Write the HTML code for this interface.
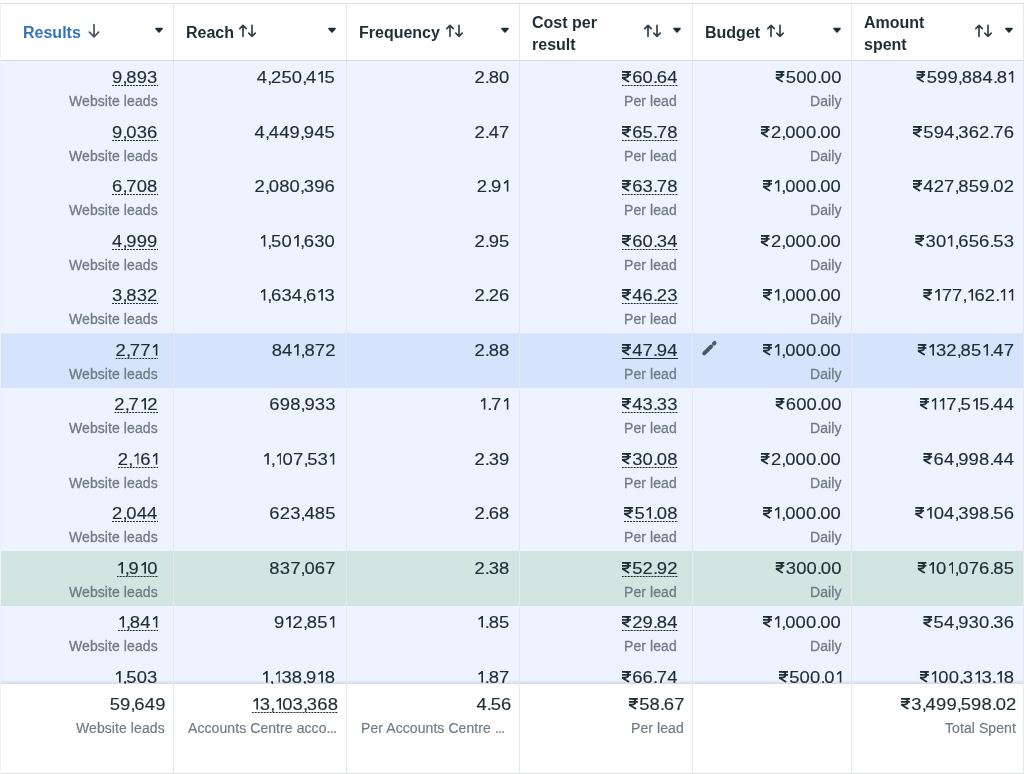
<!DOCTYPE html><html><head><meta charset="utf-8"><style>

html,body{margin:0;padding:0;}
body{width:1024px;height:774px;overflow:hidden;background:#fff;position:relative;font-family:"Liberation Sans",sans-serif;color:#1f2d35;}
.a{position:absolute;}
.t{will-change:transform;}
.t{position:absolute;white-space:nowrap;}
.num{font-size:16px;line-height:20px;letter-spacing:0.15px;transform:scaleX(1.15);transform-origin:100% 50%;-webkit-text-stroke:0.15px currentColor;}
.num i{font-style:normal;}
.num .cm{margin-right:-1.3px;}
.one{display:inline-block;width:4.78px;height:11.7px;vertical-align:0;margin-left:1.3px;margin-right:1.0px;}
.onet{display:inline-block;width:4.78px;height:11.7px;vertical-align:0;margin-left:1.3px;margin-right:0.2px;}
.sub{font-size:14px;line-height:18px;letter-spacing:0.08px;color:#707b85;-webkit-text-stroke:0.3px currentColor;}
.hd{font-size:16px;line-height:22px;font-weight:bold;letter-spacing:0px;}
.rp{display:inline-block;width:8.2px;height:11.7px;vertical-align:0px;margin-right:0.9px;}
.dot{background-image:linear-gradient(to right,#1c2b33 55%,transparent 55%);background-size:2.6px 1.4px;background-repeat:repeat-x;background-position:0px 15.7px;padding-bottom:3px;}
.sol{background-image:linear-gradient(#1f2d35,#1f2d35);background-size:100% 1.2px;background-repeat:no-repeat;background-position:0 15.9px;padding-bottom:3px;}

</style></head><body>
<svg width="0" height="0" style="position:absolute"><defs><symbol id="rup" viewBox="0 0 10 12"><path d="M0,0.9 H10 M0,3.9 H10 M3.4,0.9 C8.5,0.9 8.5,6.9 3.4,6.9 H0.5 L7.9,11.2" fill="none" stroke="currentColor" stroke-width="1.85"/></symbol><symbol id="one1" viewBox="0 0 5.5 11.7"><path d="M3.5,0 H5.2 V11.7 H3.5 V2.3 L1.0,4.1 L0.3,2.8 L3.5,0.3 Z" fill="currentColor"/></symbol></defs></svg>
<div class="a" style="left:0;top:60.5px;width:1024px;height:55.0px;background:#edf4ff"></div>
<div class="a" style="left:0;top:115.0px;width:1024px;height:55.0px;background:#edf4ff"></div>
<div class="a" style="left:0;top:169.5px;width:1024px;height:55.0px;background:#edf4ff"></div>
<div class="a" style="left:0;top:224.0px;width:1024px;height:55.0px;background:#edf4ff"></div>
<div class="a" style="left:0;top:278.5px;width:1024px;height:55.0px;background:#edf4ff"></div>
<div class="a" style="left:0;top:333.0px;width:1024px;height:55.0px;background:#d5e4fc"></div>
<div class="a" style="left:0;top:387.5px;width:1024px;height:55.0px;background:#edf4ff"></div>
<div class="a" style="left:0;top:442.0px;width:1024px;height:55.0px;background:#edf4ff"></div>
<div class="a" style="left:0;top:496.5px;width:1024px;height:55.0px;background:#edf4ff"></div>
<div class="a" style="left:0;top:551.0px;width:1024px;height:55.0px;background:#d2e5e0"></div>
<div class="a" style="left:0;top:605.5px;width:1024px;height:55.0px;background:#edf4ff"></div>
<div class="a" style="left:0;top:660.0px;width:1024px;height:55.0px;background:#edf4ff"></div>
<div class="a" style="left:0;top:3px;width:1024px;height:57px;background:#fff"></div>
<div class="t num" style="right:866.35px;top:68.26px;"><span class="dot">9<i class="cm">,</i>893</span></div>
<div class="t sub" style="right:866.42px;top:92.25px;">Website leads</div>
<div class="t num" style="right:688.75px;top:68.26px;">4<i class="cm">,</i>250<i class="cm">,</i>4<svg class="one" viewBox="0 0 5.5 11.7" preserveAspectRatio="none"><use href="#one1"/></svg>5</div>
<div class="t num" style="right:514.95px;top:68.26px;">2<i class="cm">.</i>80</div>
<div class="t num" style="right:346.65px;top:68.26px;"><span class="dot"><svg class="rp" viewBox="0 0 10 12" preserveAspectRatio="none"><use href="#rup"/></svg>60<i class="cm">.</i>64</span></div>
<div class="t sub" style="right:346.72px;top:92.25px;">Per lead</div>
<div class="t num" style="right:182.65px;top:68.26px;"><svg class="rp" viewBox="0 0 10 12" preserveAspectRatio="none"><use href="#rup"/></svg>500<i class="cm">.</i>00</div>
<div class="t sub" style="right:182.72px;top:92.25px;">Daily</div>
<div class="t num" style="right:10.05px;top:68.26px;"><svg class="rp" viewBox="0 0 10 12" preserveAspectRatio="none"><use href="#rup"/></svg>599<i class="cm">,</i>884<i class="cm">.</i>8<svg class="onet" viewBox="0 0 5.5 11.7" preserveAspectRatio="none"><use href="#one1"/></svg></div>
<div class="t num" style="right:866.35px;top:122.76px;"><span class="dot">9<i class="cm">,</i>036</span></div>
<div class="t sub" style="right:866.42px;top:146.75px;">Website leads</div>
<div class="t num" style="right:688.75px;top:122.76px;">4<i class="cm">,</i>449<i class="cm">,</i>945</div>
<div class="t num" style="right:514.95px;top:122.76px;">2<i class="cm">.</i>47</div>
<div class="t num" style="right:346.65px;top:122.76px;"><span class="dot"><svg class="rp" viewBox="0 0 10 12" preserveAspectRatio="none"><use href="#rup"/></svg>65<i class="cm">.</i>78</span></div>
<div class="t sub" style="right:346.72px;top:146.75px;">Per lead</div>
<div class="t num" style="right:182.65px;top:122.76px;"><svg class="rp" viewBox="0 0 10 12" preserveAspectRatio="none"><use href="#rup"/></svg>2<i class="cm">,</i>000<i class="cm">.</i>00</div>
<div class="t sub" style="right:182.72px;top:146.75px;">Daily</div>
<div class="t num" style="right:10.05px;top:122.76px;"><svg class="rp" viewBox="0 0 10 12" preserveAspectRatio="none"><use href="#rup"/></svg>594<i class="cm">,</i>362<i class="cm">.</i>76</div>
<div class="t num" style="right:866.35px;top:177.26px;"><span class="dot">6<i class="cm">,</i>708</span></div>
<div class="t sub" style="right:866.42px;top:201.25px;">Website leads</div>
<div class="t num" style="right:688.75px;top:177.26px;">2<i class="cm">,</i>080<i class="cm">,</i>396</div>
<div class="t num" style="right:514.95px;top:177.26px;">2<i class="cm">.</i>9<svg class="onet" viewBox="0 0 5.5 11.7" preserveAspectRatio="none"><use href="#one1"/></svg></div>
<div class="t num" style="right:346.65px;top:177.26px;"><span class="dot"><svg class="rp" viewBox="0 0 10 12" preserveAspectRatio="none"><use href="#rup"/></svg>63<i class="cm">.</i>78</span></div>
<div class="t sub" style="right:346.72px;top:201.25px;">Per lead</div>
<div class="t num" style="right:182.65px;top:177.26px;"><svg class="rp" viewBox="0 0 10 12" preserveAspectRatio="none"><use href="#rup"/></svg><svg class="one" viewBox="0 0 5.5 11.7" preserveAspectRatio="none"><use href="#one1"/></svg><i class="cm">,</i>000<i class="cm">.</i>00</div>
<div class="t sub" style="right:182.72px;top:201.25px;">Daily</div>
<div class="t num" style="right:10.05px;top:177.26px;"><svg class="rp" viewBox="0 0 10 12" preserveAspectRatio="none"><use href="#rup"/></svg>427<i class="cm">,</i>859<i class="cm">.</i>02</div>
<div class="t num" style="right:866.35px;top:231.76px;"><span class="dot">4<i class="cm">,</i>999</span></div>
<div class="t sub" style="right:866.42px;top:255.75px;">Website leads</div>
<div class="t num" style="right:688.75px;top:231.76px;"><svg class="one" viewBox="0 0 5.5 11.7" preserveAspectRatio="none"><use href="#one1"/></svg><i class="cm">,</i>50<svg class="one" viewBox="0 0 5.5 11.7" preserveAspectRatio="none"><use href="#one1"/></svg><i class="cm">,</i>630</div>
<div class="t num" style="right:514.95px;top:231.76px;">2<i class="cm">.</i>95</div>
<div class="t num" style="right:346.65px;top:231.76px;"><span class="dot"><svg class="rp" viewBox="0 0 10 12" preserveAspectRatio="none"><use href="#rup"/></svg>60<i class="cm">.</i>34</span></div>
<div class="t sub" style="right:346.72px;top:255.75px;">Per lead</div>
<div class="t num" style="right:182.65px;top:231.76px;"><svg class="rp" viewBox="0 0 10 12" preserveAspectRatio="none"><use href="#rup"/></svg>2<i class="cm">,</i>000<i class="cm">.</i>00</div>
<div class="t sub" style="right:182.72px;top:255.75px;">Daily</div>
<div class="t num" style="right:10.05px;top:231.76px;"><svg class="rp" viewBox="0 0 10 12" preserveAspectRatio="none"><use href="#rup"/></svg>30<svg class="one" viewBox="0 0 5.5 11.7" preserveAspectRatio="none"><use href="#one1"/></svg><i class="cm">,</i>656<i class="cm">.</i>53</div>
<div class="t num" style="right:866.35px;top:286.26px;"><span class="dot">3<i class="cm">,</i>832</span></div>
<div class="t sub" style="right:866.42px;top:310.25px;">Website leads</div>
<div class="t num" style="right:688.75px;top:286.26px;"><svg class="one" viewBox="0 0 5.5 11.7" preserveAspectRatio="none"><use href="#one1"/></svg><i class="cm">,</i>634<i class="cm">,</i>6<svg class="one" viewBox="0 0 5.5 11.7" preserveAspectRatio="none"><use href="#one1"/></svg>3</div>
<div class="t num" style="right:514.95px;top:286.26px;">2<i class="cm">.</i>26</div>
<div class="t num" style="right:346.65px;top:286.26px;"><span class="dot"><svg class="rp" viewBox="0 0 10 12" preserveAspectRatio="none"><use href="#rup"/></svg>46<i class="cm">.</i>23</span></div>
<div class="t sub" style="right:346.72px;top:310.25px;">Per lead</div>
<div class="t num" style="right:182.65px;top:286.26px;"><svg class="rp" viewBox="0 0 10 12" preserveAspectRatio="none"><use href="#rup"/></svg><svg class="one" viewBox="0 0 5.5 11.7" preserveAspectRatio="none"><use href="#one1"/></svg><i class="cm">,</i>000<i class="cm">.</i>00</div>
<div class="t sub" style="right:182.72px;top:310.25px;">Daily</div>
<div class="t num" style="right:10.05px;top:286.26px;"><svg class="rp" viewBox="0 0 10 12" preserveAspectRatio="none"><use href="#rup"/></svg><svg class="one" viewBox="0 0 5.5 11.7" preserveAspectRatio="none"><use href="#one1"/></svg>77<i class="cm">,</i><svg class="one" viewBox="0 0 5.5 11.7" preserveAspectRatio="none"><use href="#one1"/></svg>62<i class="cm">.</i><svg class="one" viewBox="0 0 5.5 11.7" preserveAspectRatio="none"><use href="#one1"/></svg><svg class="onet" viewBox="0 0 5.5 11.7" preserveAspectRatio="none"><use href="#one1"/></svg></div>
<div class="t num" style="right:866.35px;top:340.76px;"><span class="dot">2<i class="cm">,</i>77<svg class="onet" viewBox="0 0 5.5 11.7" preserveAspectRatio="none"><use href="#one1"/></svg></span></div>
<div class="t sub" style="right:866.42px;top:364.75px;">Website leads</div>
<div class="t num" style="right:688.75px;top:340.76px;">84<svg class="one" viewBox="0 0 5.5 11.7" preserveAspectRatio="none"><use href="#one1"/></svg><i class="cm">,</i>872</div>
<div class="t num" style="right:514.95px;top:340.76px;">2<i class="cm">.</i>88</div>
<div class="t num" style="right:346.65px;top:340.76px;"><span class="sol"><svg class="rp" viewBox="0 0 10 12" preserveAspectRatio="none"><use href="#rup"/></svg>47<i class="cm">.</i>94</span></div>
<div class="t sub" style="right:346.72px;top:364.75px;">Per lead</div>
<div class="t num" style="right:182.65px;top:340.76px;"><svg class="rp" viewBox="0 0 10 12" preserveAspectRatio="none"><use href="#rup"/></svg><svg class="one" viewBox="0 0 5.5 11.7" preserveAspectRatio="none"><use href="#one1"/></svg><i class="cm">,</i>000<i class="cm">.</i>00</div>
<div class="t sub" style="right:182.72px;top:364.75px;">Daily</div>
<div class="t num" style="right:10.05px;top:340.76px;"><svg class="rp" viewBox="0 0 10 12" preserveAspectRatio="none"><use href="#rup"/></svg><svg class="one" viewBox="0 0 5.5 11.7" preserveAspectRatio="none"><use href="#one1"/></svg>32<i class="cm">,</i>85<svg class="one" viewBox="0 0 5.5 11.7" preserveAspectRatio="none"><use href="#one1"/></svg><i class="cm">.</i>47</div>
<div class="t num" style="right:866.35px;top:395.26px;"><span class="dot">2<i class="cm">,</i>7<svg class="one" viewBox="0 0 5.5 11.7" preserveAspectRatio="none"><use href="#one1"/></svg>2</span></div>
<div class="t sub" style="right:866.42px;top:419.25px;">Website leads</div>
<div class="t num" style="right:688.75px;top:395.26px;">698<i class="cm">,</i>933</div>
<div class="t num" style="right:514.95px;top:395.26px;"><svg class="one" viewBox="0 0 5.5 11.7" preserveAspectRatio="none"><use href="#one1"/></svg><i class="cm">.</i>7<svg class="onet" viewBox="0 0 5.5 11.7" preserveAspectRatio="none"><use href="#one1"/></svg></div>
<div class="t num" style="right:346.65px;top:395.26px;"><span class="dot"><svg class="rp" viewBox="0 0 10 12" preserveAspectRatio="none"><use href="#rup"/></svg>43<i class="cm">.</i>33</span></div>
<div class="t sub" style="right:346.72px;top:419.25px;">Per lead</div>
<div class="t num" style="right:182.65px;top:395.26px;"><svg class="rp" viewBox="0 0 10 12" preserveAspectRatio="none"><use href="#rup"/></svg>600<i class="cm">.</i>00</div>
<div class="t sub" style="right:182.72px;top:419.25px;">Daily</div>
<div class="t num" style="right:10.05px;top:395.26px;"><svg class="rp" viewBox="0 0 10 12" preserveAspectRatio="none"><use href="#rup"/></svg><svg class="one" viewBox="0 0 5.5 11.7" preserveAspectRatio="none"><use href="#one1"/></svg><svg class="one" viewBox="0 0 5.5 11.7" preserveAspectRatio="none"><use href="#one1"/></svg>7<i class="cm">,</i>5<svg class="one" viewBox="0 0 5.5 11.7" preserveAspectRatio="none"><use href="#one1"/></svg>5<i class="cm">.</i>44</div>
<div class="t num" style="right:866.35px;top:449.76px;"><span class="dot">2<i class="cm">,</i><svg class="one" viewBox="0 0 5.5 11.7" preserveAspectRatio="none"><use href="#one1"/></svg>6<svg class="onet" viewBox="0 0 5.5 11.7" preserveAspectRatio="none"><use href="#one1"/></svg></span></div>
<div class="t sub" style="right:866.42px;top:473.75px;">Website leads</div>
<div class="t num" style="right:688.75px;top:449.76px;"><svg class="one" viewBox="0 0 5.5 11.7" preserveAspectRatio="none"><use href="#one1"/></svg><i class="cm">,</i><svg class="one" viewBox="0 0 5.5 11.7" preserveAspectRatio="none"><use href="#one1"/></svg>07<i class="cm">,</i>53<svg class="onet" viewBox="0 0 5.5 11.7" preserveAspectRatio="none"><use href="#one1"/></svg></div>
<div class="t num" style="right:514.95px;top:449.76px;">2<i class="cm">.</i>39</div>
<div class="t num" style="right:346.65px;top:449.76px;"><span class="dot"><svg class="rp" viewBox="0 0 10 12" preserveAspectRatio="none"><use href="#rup"/></svg>30<i class="cm">.</i>08</span></div>
<div class="t sub" style="right:346.72px;top:473.75px;">Per lead</div>
<div class="t num" style="right:182.65px;top:449.76px;"><svg class="rp" viewBox="0 0 10 12" preserveAspectRatio="none"><use href="#rup"/></svg>2<i class="cm">,</i>000<i class="cm">.</i>00</div>
<div class="t sub" style="right:182.72px;top:473.75px;">Daily</div>
<div class="t num" style="right:10.05px;top:449.76px;"><svg class="rp" viewBox="0 0 10 12" preserveAspectRatio="none"><use href="#rup"/></svg>64<i class="cm">,</i>998<i class="cm">.</i>44</div>
<div class="t num" style="right:866.35px;top:504.26px;"><span class="dot">2<i class="cm">,</i>044</span></div>
<div class="t sub" style="right:866.42px;top:528.25px;">Website leads</div>
<div class="t num" style="right:688.75px;top:504.26px;">623<i class="cm">,</i>485</div>
<div class="t num" style="right:514.95px;top:504.26px;">2<i class="cm">.</i>68</div>
<div class="t num" style="right:346.65px;top:504.26px;"><span class="dot"><svg class="rp" viewBox="0 0 10 12" preserveAspectRatio="none"><use href="#rup"/></svg>5<svg class="one" viewBox="0 0 5.5 11.7" preserveAspectRatio="none"><use href="#one1"/></svg><i class="cm">.</i>08</span></div>
<div class="t sub" style="right:346.72px;top:528.25px;">Per lead</div>
<div class="t num" style="right:182.65px;top:504.26px;"><svg class="rp" viewBox="0 0 10 12" preserveAspectRatio="none"><use href="#rup"/></svg><svg class="one" viewBox="0 0 5.5 11.7" preserveAspectRatio="none"><use href="#one1"/></svg><i class="cm">,</i>000<i class="cm">.</i>00</div>
<div class="t sub" style="right:182.72px;top:528.25px;">Daily</div>
<div class="t num" style="right:10.05px;top:504.26px;"><svg class="rp" viewBox="0 0 10 12" preserveAspectRatio="none"><use href="#rup"/></svg><svg class="one" viewBox="0 0 5.5 11.7" preserveAspectRatio="none"><use href="#one1"/></svg>04<i class="cm">,</i>398<i class="cm">.</i>56</div>
<div class="t num" style="right:866.35px;top:558.76px;"><span class="dot"><svg class="one" viewBox="0 0 5.5 11.7" preserveAspectRatio="none"><use href="#one1"/></svg><i class="cm">,</i>9<svg class="one" viewBox="0 0 5.5 11.7" preserveAspectRatio="none"><use href="#one1"/></svg>0</span></div>
<div class="t sub" style="right:866.42px;top:582.75px;">Website leads</div>
<div class="t num" style="right:688.75px;top:558.76px;">837<i class="cm">,</i>067</div>
<div class="t num" style="right:514.95px;top:558.76px;">2<i class="cm">.</i>38</div>
<div class="t num" style="right:346.65px;top:558.76px;"><span class="dot"><svg class="rp" viewBox="0 0 10 12" preserveAspectRatio="none"><use href="#rup"/></svg>52<i class="cm">.</i>92</span></div>
<div class="t sub" style="right:346.72px;top:582.75px;">Per lead</div>
<div class="t num" style="right:182.65px;top:558.76px;"><svg class="rp" viewBox="0 0 10 12" preserveAspectRatio="none"><use href="#rup"/></svg>300<i class="cm">.</i>00</div>
<div class="t sub" style="right:182.72px;top:582.75px;">Daily</div>
<div class="t num" style="right:10.05px;top:558.76px;"><svg class="rp" viewBox="0 0 10 12" preserveAspectRatio="none"><use href="#rup"/></svg><svg class="one" viewBox="0 0 5.5 11.7" preserveAspectRatio="none"><use href="#one1"/></svg>0<svg class="one" viewBox="0 0 5.5 11.7" preserveAspectRatio="none"><use href="#one1"/></svg><i class="cm">,</i>076<i class="cm">.</i>85</div>
<div class="t num" style="right:866.35px;top:613.26px;"><span class="dot"><svg class="one" viewBox="0 0 5.5 11.7" preserveAspectRatio="none"><use href="#one1"/></svg><i class="cm">,</i>84<svg class="onet" viewBox="0 0 5.5 11.7" preserveAspectRatio="none"><use href="#one1"/></svg></span></div>
<div class="t sub" style="right:866.42px;top:637.25px;">Website leads</div>
<div class="t num" style="right:688.75px;top:613.26px;">9<svg class="one" viewBox="0 0 5.5 11.7" preserveAspectRatio="none"><use href="#one1"/></svg>2<i class="cm">,</i>85<svg class="onet" viewBox="0 0 5.5 11.7" preserveAspectRatio="none"><use href="#one1"/></svg></div>
<div class="t num" style="right:514.95px;top:613.26px;"><svg class="one" viewBox="0 0 5.5 11.7" preserveAspectRatio="none"><use href="#one1"/></svg><i class="cm">.</i>85</div>
<div class="t num" style="right:346.65px;top:613.26px;"><span class="dot"><svg class="rp" viewBox="0 0 10 12" preserveAspectRatio="none"><use href="#rup"/></svg>29<i class="cm">.</i>84</span></div>
<div class="t sub" style="right:346.72px;top:637.25px;">Per lead</div>
<div class="t num" style="right:182.65px;top:613.26px;"><svg class="rp" viewBox="0 0 10 12" preserveAspectRatio="none"><use href="#rup"/></svg><svg class="one" viewBox="0 0 5.5 11.7" preserveAspectRatio="none"><use href="#one1"/></svg><i class="cm">,</i>000<i class="cm">.</i>00</div>
<div class="t sub" style="right:182.72px;top:637.25px;">Daily</div>
<div class="t num" style="right:10.05px;top:613.26px;"><svg class="rp" viewBox="0 0 10 12" preserveAspectRatio="none"><use href="#rup"/></svg>54<i class="cm">,</i>930<i class="cm">.</i>36</div>
<div class="t num" style="right:866.35px;top:667.76px;"><svg class="one" viewBox="0 0 5.5 11.7" preserveAspectRatio="none"><use href="#one1"/></svg><i class="cm">,</i>503</div>
<div class="t sub" style="right:866.42px;top:691.75px;">Website leads</div>
<div class="t num" style="right:688.75px;top:667.76px;"><svg class="one" viewBox="0 0 5.5 11.7" preserveAspectRatio="none"><use href="#one1"/></svg><i class="cm">,</i><svg class="one" viewBox="0 0 5.5 11.7" preserveAspectRatio="none"><use href="#one1"/></svg>38<i class="cm">,</i>9<svg class="one" viewBox="0 0 5.5 11.7" preserveAspectRatio="none"><use href="#one1"/></svg>8</div>
<div class="t num" style="right:514.95px;top:667.76px;"><svg class="one" viewBox="0 0 5.5 11.7" preserveAspectRatio="none"><use href="#one1"/></svg><i class="cm">.</i>87</div>
<div class="t num" style="right:346.65px;top:667.76px;"><svg class="rp" viewBox="0 0 10 12" preserveAspectRatio="none"><use href="#rup"/></svg>66<i class="cm">.</i>74</div>
<div class="t sub" style="right:346.72px;top:691.75px;">Per lead</div>
<div class="t num" style="right:182.65px;top:667.76px;"><svg class="rp" viewBox="0 0 10 12" preserveAspectRatio="none"><use href="#rup"/></svg>500<i class="cm">.</i>0<svg class="onet" viewBox="0 0 5.5 11.7" preserveAspectRatio="none"><use href="#one1"/></svg></div>
<div class="t sub" style="right:182.72px;top:691.75px;">Daily</div>
<div class="t num" style="right:10.05px;top:667.76px;"><svg class="rp" viewBox="0 0 10 12" preserveAspectRatio="none"><use href="#rup"/></svg><svg class="one" viewBox="0 0 5.5 11.7" preserveAspectRatio="none"><use href="#one1"/></svg>00<i class="cm">,</i>3<svg class="one" viewBox="0 0 5.5 11.7" preserveAspectRatio="none"><use href="#one1"/></svg>3<i class="cm">.</i><svg class="one" viewBox="0 0 5.5 11.7" preserveAspectRatio="none"><use href="#one1"/></svg>8</div>
<svg class="a" style="left:699px;top:337.3px" width="24" height="24" viewBox="0 0 24 24"><path d="M5.2,16.4 L12.1,9.5 M14.9,6.6 L15.6,5.9" fill="none" stroke="#4a5a68" stroke-width="3.9" stroke-linecap="round"/></svg>
<div class="a" style="left:0;top:680px;width:1024px;height:4px;background:linear-gradient(to bottom,rgba(0,0,0,0),rgba(0,0,0,0.10))"></div>
<div class="a" style="left:0;top:684px;width:1024px;height:90px;background:#fff"></div>
<div class="t num" style="right:858.25px;top:695.46px;">59<i class="cm">,</i>649</div>
<div class="t sub" style="right:859.02px;top:719.15px;color:#717c86;-webkit-text-stroke:0.2px currentColor;">Website leads</div>
<div class="t num" style="right:685.65px;top:695.46px;"><span class="dot"><svg class="one" viewBox="0 0 5.5 11.7" preserveAspectRatio="none"><use href="#one1"/></svg>3<i class="cm">,</i><svg class="one" viewBox="0 0 5.5 11.7" preserveAspectRatio="none"><use href="#one1"/></svg>03<i class="cm">,</i>368</span></div>
<div class="t sub" style="right:687.42px;top:719.15px;color:#717c86;-webkit-text-stroke:0.2px currentColor;">Accounts Centre acco<span style="letter-spacing:-0.7px">..</span>.</div>
<div class="t num" style="right:512.85px;top:695.46px;">4<i class="cm">.</i>56</div>
<div class="t sub" style="right:518.92px;top:719.15px;color:#717c86;-webkit-text-stroke:0.2px currentColor;">Per Accounts Centre <span style="letter-spacing:-0.7px">..</span>.</div>
<div class="t num" style="right:339.85px;top:695.46px;"><svg class="rp" viewBox="0 0 10 12" preserveAspectRatio="none"><use href="#rup"/></svg>58<i class="cm">.</i>67</div>
<div class="t sub" style="right:339.92px;top:719.15px;color:#717c86;-webkit-text-stroke:0.2px currentColor;">Per lead</div>
<div class="t num" style="right:7.95px;top:695.46px;"><svg class="rp" viewBox="0 0 10 12" preserveAspectRatio="none"><use href="#rup"/></svg>3<i class="cm">,</i>499<i class="cm">,</i>598<i class="cm">.</i>02</div>
<div class="t sub" style="right:8.02px;top:719.15px;color:#717c86;-webkit-text-stroke:0.2px currentColor;">Total Spent</div>
<div class="a" style="left:0;top:3px;width:1024px;height:1px;background:#dcdee1"></div>
<div class="a" style="left:0;top:60px;width:1024px;height:1px;background:#d9dbde"></div>
<div class="a" style="left:0;top:773px;width:1024px;height:1px;background:#dcdee1"></div>
<div class="a" style="left:0;top:3px;width:1px;height:774px;background:#eff1f4"></div>
<div class="a" style="left:173px;top:4px;width:1px;height:774px;background:#e6e8ec"></div>
<div class="a" style="left:346px;top:4px;width:1px;height:774px;background:#e6e8ec"></div>
<div class="a" style="left:519px;top:4px;width:1px;height:774px;background:#e6e8ec"></div>
<div class="a" style="left:692px;top:4px;width:1px;height:774px;background:#e6e8ec"></div>
<div class="a" style="left:851px;top:4px;width:1px;height:774px;background:#e6e8ec"></div>
<div class="a" style="left:1023px;top:4px;width:1px;height:774px;background:#e6e8ec"></div>
<div class="t hd" style="left:22.5px;top:22.06px;color:#3474b9">Results</div>
<div class="t hd" style="left:186.25px;top:22.06px;">Reach</div>
<div class="t hd" style="left:359.3px;top:22.06px;">Frequency</div>
<div class="t hd" style="left:532px;top:11.66px;">Cost per</div>
<div class="t hd" style="left:532px;top:33.76px;">result</div>
<div class="t hd" style="left:705.2px;top:22.06px;">Budget</div>
<div class="t hd" style="left:864px;top:11.66px;">Amount</div>
<div class="t hd" style="left:864px;top:33.76px;">spent</div>
<svg class="a" style="left:238px;top:23.3px" width="19" height="15" viewBox="0 0 19 15"><path d="M5,13.3 V2.4 M1.8,5.6 L5,2.4 L8.2,5.6 M14,2.4 V13.3 M10.8,10.1 L14,13.3 L17.2,10.1" fill="none" stroke="#33414b" stroke-width="1.7" stroke-linecap="round" stroke-linejoin="round"/></svg>
<svg class="a" style="left:445px;top:23.3px" width="19" height="15" viewBox="0 0 19 15"><path d="M5,13.3 V2.4 M1.8,5.6 L5,2.4 L8.2,5.6 M14,2.4 V13.3 M10.8,10.1 L14,13.3 L17.2,10.1" fill="none" stroke="#33414b" stroke-width="1.7" stroke-linecap="round" stroke-linejoin="round"/></svg>
<svg class="a" style="left:642.7px;top:23.3px" width="19" height="15" viewBox="0 0 19 15"><path d="M5,13.3 V2.4 M1.8,5.6 L5,2.4 L8.2,5.6 M14,2.4 V13.3 M10.8,10.1 L14,13.3 L17.2,10.1" fill="none" stroke="#33414b" stroke-width="1.7" stroke-linecap="round" stroke-linejoin="round"/></svg>
<svg class="a" style="left:766.2px;top:23.3px" width="19" height="15" viewBox="0 0 19 15"><path d="M5,13.3 V2.4 M1.8,5.6 L5,2.4 L8.2,5.6 M14,2.4 V13.3 M10.8,10.1 L14,13.3 L17.2,10.1" fill="none" stroke="#33414b" stroke-width="1.7" stroke-linecap="round" stroke-linejoin="round"/></svg>
<svg class="a" style="left:974px;top:23.3px" width="19" height="15" viewBox="0 0 19 15"><path d="M5,13.3 V2.4 M1.8,5.6 L5,2.4 L8.2,5.6 M14,2.4 V13.3 M10.8,10.1 L14,13.3 L17.2,10.1" fill="none" stroke="#33414b" stroke-width="1.7" stroke-linecap="round" stroke-linejoin="round"/></svg>
<svg class="a" style="left:87.2px;top:21.5px" width="14" height="16" viewBox="0 0 14 16"><path d="M7,2.6 V14.8 M2.4,10.2 L7,14.8 L11.6,10.2" fill="none" stroke="#4a5864" stroke-width="1.75" stroke-linecap="round" stroke-linejoin="round"/></svg>
<svg class="a" style="left:153.75px;top:26.9px" width="10" height="7" viewBox="0 0 10 7"><path d="M2,1.6 H8 L5,4.9 Z" fill="#1f2d35" stroke="#1f2d35" stroke-width="1.6" stroke-linejoin="round"/></svg>
<svg class="a" style="left:327.25px;top:26.9px" width="10" height="7" viewBox="0 0 10 7"><path d="M2,1.6 H8 L5,4.9 Z" fill="#1f2d35" stroke="#1f2d35" stroke-width="1.6" stroke-linejoin="round"/></svg>
<svg class="a" style="left:500.25px;top:26.9px" width="10" height="7" viewBox="0 0 10 7"><path d="M2,1.6 H8 L5,4.9 Z" fill="#1f2d35" stroke="#1f2d35" stroke-width="1.6" stroke-linejoin="round"/></svg>
<svg class="a" style="left:672.35px;top:26.9px" width="10" height="7" viewBox="0 0 10 7"><path d="M2,1.6 H8 L5,4.9 Z" fill="#1f2d35" stroke="#1f2d35" stroke-width="1.6" stroke-linejoin="round"/></svg>
<svg class="a" style="left:831.75px;top:26.9px" width="10" height="7" viewBox="0 0 10 7"><path d="M2,1.6 H8 L5,4.9 Z" fill="#1f2d35" stroke="#1f2d35" stroke-width="1.6" stroke-linejoin="round"/></svg>
<svg class="a" style="left:1004.35px;top:26.9px" width="10" height="7" viewBox="0 0 10 7"><path d="M2,1.6 H8 L5,4.9 Z" fill="#1f2d35" stroke="#1f2d35" stroke-width="1.6" stroke-linejoin="round"/></svg>
</body></html>
